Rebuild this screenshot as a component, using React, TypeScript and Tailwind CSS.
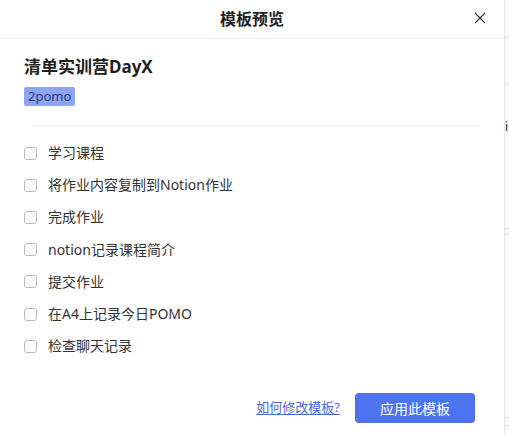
const items = [
  '学习课程',
  '将作业内容复制到Notion作业',
  '完成作业',
  'notion记录课程简介',
  '提交作业',
  '在A4上记录今日POMO',
  '检查聊天记录',
];

export default function App() {
  return (
    <div
      className="flex h-[435px] w-[509px] overflow-hidden bg-white text-[#262626]"
      style={{ fontFamily: '"Noto Sans", "Noto Sans CJK SC", sans-serif' }}
    >
      {/* Modal */}
      <div className="flex w-[505px] shrink-0 flex-col border-r border-[#e4e4e4] bg-white">
        {/* Header */}
        <div className="relative flex h-[39px] shrink-0 items-center justify-center border-b border-[#f0f0f0]">
          <span className="text-[16px] font-bold leading-none text-[#1f1f1f]">模板预览</span>
          <button className="absolute right-[17px] top-[11px] flex h-[14px] w-[14px] items-center justify-center text-[#333]">
            <svg width="12" height="12" viewBox="0 0 12 12" fill="none" stroke="currentColor" strokeWidth="1.2">
              <path d="M1 1 L11 11 M11 1 L1 11" />
            </svg>
          </button>
        </div>

        {/* Body */}
        <div className="flex flex-1 flex-col px-6 pt-[16px]">
          <h2 className="text-[17px] font-bold leading-[24px] text-[#1f1f1f]">清单实训营DayX</h2>
          <div className="mt-[8px] flex">
            <span className="rounded-[2px] bg-[#8ea4f4] px-[4px] text-[13px] leading-[19px] text-[#2d3a78]">2pomo</span>
          </div>
          <div className="ml-2 mt-[19px] h-px bg-[#f1f1f1]" />

          <ul className="mt-[11px] flex flex-col">
            {items.map((t) => (
              <li key={t} className="flex h-[32.2px] items-center gap-[11px]">
                <span className="h-[13px] w-[13px] shrink-0 rounded-[3px] border border-[#b8b8b8] bg-white" />
                <span className="text-[14px] leading-none text-[#333]">{t}</span>
              </li>
            ))}
          </ul>
        </div>

        {/* Footer */}
        <div className="flex shrink-0 items-center justify-end gap-[15px] pb-[12px] pr-[29px]">
          <a className="text-[13px] text-[#4a6ad8] underline underline-offset-2">如何修改模板?</a>
          <button className="h-[30px] w-[120px] rounded-[4px] bg-[#4e73f0] text-[14px] text-white">应用此模板</button>
        </div>
      </div>

      {/* Background page strip */}
      <div className="flex flex-1 flex-col bg-[#fafafa]">
        <div className="mt-[37px] h-px bg-[#e2e2e2]" />
        <div className="mt-[46px] h-px bg-[#e2e2e2]" />
        <span className="mt-[36px] text-[12px] leading-none text-[#222]">i</span>
        <div className="mt-[95px] h-px bg-[#d8d8d8]" />
        <div className="mt-[5px] h-px bg-[#d8d8d8]" />
        <div className="mt-[182px] h-px bg-[#d8d8d8]" />
        <div className="mt-[7px] h-px bg-[#d8d8d8]" />
      </div>
    </div>
  );
}
